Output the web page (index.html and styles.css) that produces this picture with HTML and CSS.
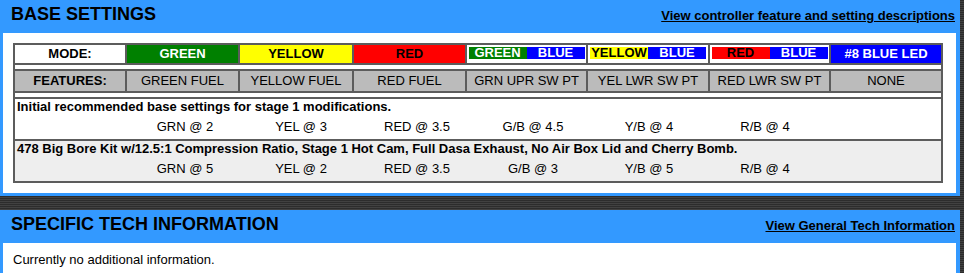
FILE: index.html
```html
<!DOCTYPE html>
<html lang="en">
<head>
  <meta charset="UTF-8" />
  <title>Base Settings</title>
  <link rel="stylesheet" href="styles.css">
</head>
<body>

  <div class="panel">
    <div class="panel-head">
      <h2>BASE SETTINGS</h2>
      <a href="#" class="head-link">View controller feature and setting descriptions</a>
    </div>
    <div class="panel-body">
      <table class="settings">
        <colgroup>
          <col class="c-label">
          <col class="c-single">
          <col class="c-wide">
          <col class="c-single">
          <col class="c-combo">
          <col class="c-combo-wide">
          <col class="c-combo">
          <col class="c-label">
        </colgroup>
        <tr class="modes">
          <td class="label">MODE:</td>
          <td class="green">GREEN</td>
          <td class="yellow">YELLOW</td>
          <td class="red">RED</td>
          <td class="combo"><div class="split"><span class="green">GREEN</span><span class="blue">BLUE</span></div></td>
          <td class="combo"><div class="split"><span class="yellow">YELLOW</span><span class="blue">BLUE</span></div></td>
          <td class="combo"><div class="split"><span class="red">RED</span><span class="blue">BLUE</span></div></td>
          <td class="blue">#8 BLUE LED</td>
        </tr>
        <tr class="spacer"><td colspan="8"></td></tr>
        <tr class="features">
          <td class="label">FEATURES:</td>
          <td>GREEN FUEL</td>
          <td>YELLOW FUEL</td>
          <td>RED FUEL</td>
          <td>GRN UPR SW PT</td>
          <td>YEL LWR SW PT</td>
          <td>RED LWR SW PT</td>
          <td>NONE</td>
        </tr>
        <tr class="spacer"><td colspan="8"></td></tr>
        <tr class="setup">
          <td colspan="8">
            <div class="setup-title">Initial recommended base settings for stage 1 modifications.</div>
            <div class="setup-values">
              <span></span>
              <span>GRN @ 2</span>
              <span>YEL @ 3</span>
              <span>RED @ 3.5</span>
              <span>G/B @ 4.5</span>
              <span>Y/B @ 4</span>
              <span>R/B @ 4</span>
            </div>
          </td>
        </tr>
        <tr class="setup alt">
          <td colspan="8">
            <div class="setup-title">478 Big Bore Kit w/12.5:1 Compression Ratio, Stage 1 Hot Cam, Full Dasa Exhaust, No Air Box Lid and Cherry Bomb.</div>
            <div class="setup-values">
              <span></span>
              <span>GRN @ 5</span>
              <span>YEL @ 2</span>
              <span>RED @ 3.5</span>
              <span>G/B @ 3</span>
              <span>Y/B @ 5</span>
              <span>R/B @ 4</span>
            </div>
          </td>
        </tr>
      </table>
    </div>
  </div>

  <div class="panel">
    <div class="panel-head">
      <h2>SPECIFIC TECH INFORMATION</h2>
      <a href="#" class="head-link">View General Tech Information</a>
    </div>
    <div class="panel-body info">
      Currently no additional information.
    </div>
  </div>

</body>
</html>
```

FILE: styles.css
```css
body {
  margin: 0;
  font-family: "Liberation Sans", Arial, sans-serif;
  font-size: 13px;
  color: #000;
  background: repeating-linear-gradient(to bottom, #2c2c2c 0, #2c2c2c 1px, #414141 1px, #414141 2px);
}
.panel {
  width: 960px;
  box-sizing: border-box;
  border: solid #3399ff;
  border-width: 0 4px 3px 3px;
  background-color: #fff;
}
.panel + .panel {
  margin-top: 14px;
}
.panel-head {
  display: flex;
  justify-content: space-between;
  align-items: baseline;
  height: 33px;
  box-sizing: border-box;
  padding: 4px 1px 0 8px;
  background-color: #3399ff;
}
.panel-head h2 {
  margin: 0;
  font-size: 18px;
  line-height: 21px;
  font-weight: bold;
}
.head-link {
  color: #000;
  font-weight: bold;
  font-size: 13px;
  text-decoration: underline;
}
.panel-body {
  padding: 10px 13px 10px 10px;
}
.panel-body.info {
  padding: 9px 10px;
  line-height: 15px;
}

/* settings table */
.settings {
  width: 930px;
  table-layout: fixed;
  border-collapse: separate;
  border-spacing: 0;
  border: 1px solid #5c5c5c;
}
.c-label { width: 112px; }
.c-single { width: 113px; }
.c-wide { width: 114px; }
.c-combo { width: 121px; }
.c-combo-wide { width: 122px; }
.settings td {
  border: 1px solid #5c5c5c;
  padding: 0;
  text-align: center;
  white-space: nowrap;
}
.settings .label {
  font-weight: bold;
}
.green { background-color: #008000; color: #fff; }
.yellow { background-color: #ffff00; color: #000; }
.red { background-color: #ff0000; color: #000; }
.blue { background-color: #0000ff; color: #fff; }

.modes td {
  height: 18px;
  line-height: 18px;
  font-weight: bold;
}
.modes td.label,
.modes td.combo {
  background-color: #fff;
}
.modes td.combo {
  padding: 2px 1px 4px 1px;
  height: 12px;
  line-height: 12px;
}
.split {
  display: flex;
  width: 116px;
  margin: 0 auto;
}
.split span {
  flex: 1;
  text-align: center;
}
.spacer td {
  height: 4px;
  background-color: #fff;
}
.features td {
  height: 20px;
  line-height: 20px;
  background-color: #bbbbbb;
}
.setup td {
  text-align: left;
  padding: 0 3px 5px 2px;
  line-height: 15px;
  background-color: #fff;
}
.setup.alt td {
  background-color: #eeeeee;
}
.setup-title {
  font-weight: bold;
}
.setup-values {
  display: grid;
  grid-template-columns: 110px repeat(6, 116px) 1fr;
  margin-top: 5px;
}
.setup-values span {
  text-align: center;
}
```
